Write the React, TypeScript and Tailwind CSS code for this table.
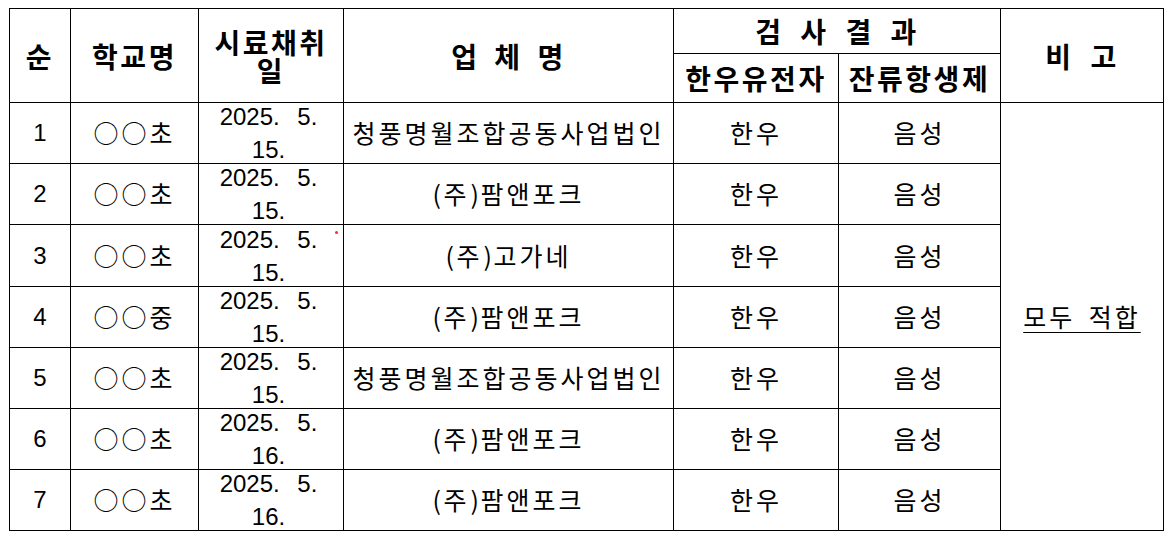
const HEAD = "flex items-center justify-center bg-white font-['Noto_Sans_CJK_KR',sans-serif] text-[28px] font-bold tracking-[2.5px] text-black";
const KO = "flex items-center justify-center bg-white font-['Noto_Sans_CJK_KR',sans-serif] text-[25px] tracking-[3px] text-black";
const NUM = "flex items-center justify-center bg-white font-['Liberation_Sans','Noto_Sans_CJK_KR',sans-serif] text-[24px] text-black";

type Row = {
  no: number;
  school: string;
  day: string;
  company: string;
};

const rows: Row[] = [
  { no: 1, school: "○○초", day: "15.", company: "청풍명월조합공동사업법인" },
  { no: 2, school: "○○초", day: "15.", company: "(주)팜앤포크" },
  { no: 3, school: "○○초", day: "15.", company: "(주)고가네" },
  { no: 4, school: "○○중", day: "15.", company: "(주)팜앤포크" },
  { no: 5, school: "○○초", day: "15.", company: "청풍명월조합공동사업법인" },
  { no: 6, school: "○○초", day: "16.", company: "(주)팜앤포크" },
  { no: 7, school: "○○초", day: "16.", company: "(주)팜앤포크" },
];

function Company({ name }: { name: string }) {
  if (!name.startsWith("(주)")) return <span>{name}</span>;
  return (
    <span className="flex items-center">
      <span className="inline-block w-[10px] text-center">(</span>
      <span className="mx-[1px]">주</span>
      <span className="inline-block w-[10px] text-center">)</span>
      <span>{name.slice(3)}</span>
    </span>
  );
}

export default function App() {
  return (
    <div className="h-[534px] w-[1173px] bg-white pl-[9px] pt-[8px]">
      <div className="grid w-max grid-cols-[60px_127px_144px_329px_164px_161px_162px] grid-rows-[44px_48px_60px_60px_61px_60px_60px_60px_60px] gap-px border border-black bg-black">
        <div className={`${HEAD} row-span-2`}>순</div>
        <div className={`${HEAD} row-span-2`}>학교명</div>
        <div className={`${HEAD} row-span-2 flex-col leading-[28px]`}>
          <span>시료채취</span>
          <span>일</span>
        </div>
        <div className={`${HEAD} row-span-2 [word-spacing:6px]`}>업 체 명</div>
        <div className={`${HEAD} col-span-2 [word-spacing:8px]`}>검 사 결 과</div>
        <div className={`${HEAD} row-span-2 [word-spacing:8px]`}>비 고</div>
        <div className={HEAD}>한우유전자</div>
        <div className={HEAD}>잔류항생제</div>

        {rows.map((r, i) => (
          <div key={r.no} className="contents">
            <div className={NUM}>{r.no}</div>
            <div className={KO}>{r.school}</div>
            <div className={`${NUM} relative flex-col pr-[5px] leading-[33px]`}>
              <span className="[word-spacing:11px]">2025. 5.</span>
              <span>{r.day}</span>
              {r.no === 3 ? (
                <span className="absolute left-[136px] top-[6px] h-[3px] w-[3px] rounded-full bg-[#ff2a2a]" />
              ) : null}
            </div>
            <div className={KO}>
              <Company name={r.company} />
            </div>
            <div className={KO}>한우</div>
            <div className={KO}>음성</div>
            {i === 0 ? (
              <div className={`${KO} row-span-7 [word-spacing:5px]`}>
                <span className="underline decoration-1 underline-offset-[5px]">모두 적합</span>
              </div>
            ) : null}
          </div>
        ))}
      </div>
    </div>
  );
}
